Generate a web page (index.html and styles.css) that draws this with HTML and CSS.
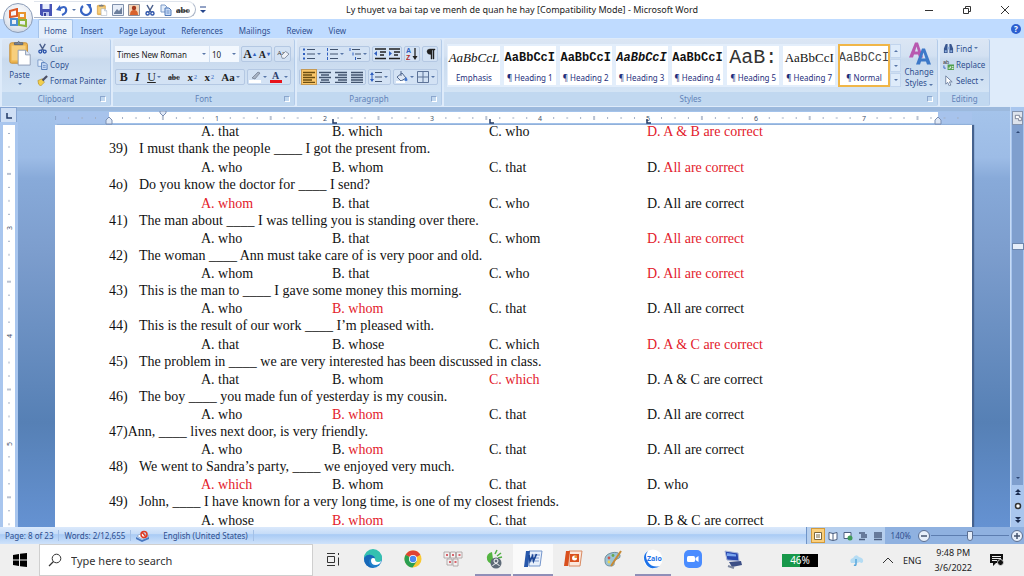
FILE: index.html
```html
<!DOCTYPE html>
<html lang="en">
<head>
    <meta charset="UTF-8">
    <title>Ly thuyet va bai tap ve menh de quan he hay - Microsoft Word</title>
    <link rel="stylesheet" href="styles.css">
</head>
<body>
    <svg class="defs" width="0" height="0" aria-hidden="true">
        <symbol id="i-cut" viewBox="0 0 12 12"><path d="M3 1l4 7M9 1L5 8" stroke="#4a5f8c" stroke-width="1.5" fill="none"/><circle cx="3.6" cy="9.4" r="1.6" fill="none" stroke="#2850a8" stroke-width="1.4"/><circle cx="8.4" cy="9.4" r="1.6" fill="none" stroke="#2850a8" stroke-width="1.4"/></symbol>
        <symbol id="i-copy" viewBox="0 0 12 12"><path d="M1 1h4l2 2v5H1z" fill="#e4eefb" stroke="#7d9bc9"/><path d="M5 4h4l2 2v5.500H5z" fill="#c8dbf6" stroke="#4f78b8"/><path d="M6.500 7h3M6.500 9h3" stroke="#6b8fc8"/></symbol>
        <symbol id="i-paste" viewBox="0 0 24 28"><rect x="1" y="3" width="19" height="22" rx="2" fill="#eeb650" stroke="#c58a32"/><rect x="3" y="6" width="15" height="16" fill="#f7cf7d"/><path d="M6 5V3h3q1.500-3 3 0h3v2z" fill="#7c8798" stroke="#586478"/><path d="M10 11h8l5 5v11H10z" fill="#fff" stroke="#8b9bb4"/><path d="M18 11v5h5" fill="#dfe7f3" stroke="#8b9bb4"/></symbol>
        <symbol id="i-abc" viewBox="0 0 14 12"><text x="0" y="9" font-family="Liberation Serif" font-size="9" font-weight="bold" fill="#333">abc</text><path d="M0 7h14" stroke="#333"/></symbol>
    </svg>

    <div class="window">
        <header class="titlebar">
            <div class="quick-area">
                <div class="quick">
                    <button title="Save"><svg viewBox="0 0 12 12"><path d="M0 0h12v12H1.500L0 10.500z" fill="#4753b5"/><path d="M2.500 0h7v5h-7z" fill="#e9effc"/><path d="M3 8h6v4H3z" fill="#b9c3ea"/><path d="M4 9h2v3H4z" fill="#35409a"/></svg></button>
                    <button title="Undo"><svg viewBox="0 0 12 12"><path d="M3 5q6-4 7 0t-4 6" fill="none" stroke="#3864c4" stroke-width="2.200"/><path d="M0 6l4-5 1 6z" fill="#3864c4"/></svg></button>
                    <i class="arrow"></i>
                    <button title="Repeat"><svg viewBox="0 0 12 12"><path d="M3 2a5 5 0 1 0 6 0" fill="none" stroke="#3864c4" stroke-width="2.200"/><path d="M6 0h5v5z" fill="#3864c4"/></svg></button>
                    <button title="Paste"><svg><use href="#i-paste"/></svg></button>
                    <button title="Picture"><svg viewBox="0 0 12 12"><path d="M.5.5h11v11H.5z" fill="#e8eef8" stroke="#8292ad"/><path d="M2 9l3-4 2 2 3-4v7H2z" fill="#6d7f9c"/></svg></button>
                    <button title="Contact"><svg viewBox="0 0 12 12"><path d="M.5.5h11v11H.5z" fill="#f5d6b8" stroke="#8a8f9c"/><circle cx="6" cy="4" r="2.200" fill="#a33a1e"/><path d="M2 11q0-5 4-5t4 5z" fill="#d9622c"/></svg></button>
                    <button title="Cut"><svg><use href="#i-cut"/></svg></button>
                    <button title="Copy"><svg><use href="#i-copy"/></svg></button>
                    <button title="Strikethrough"><svg><use href="#i-abc"/></svg></button>
                </div>
                <svg class="more" viewBox="0 0 6 8"><path d="M0 1h6" stroke="#26468c"/><path d="M0 4h6L3 7z" fill="#26468c"/></svg>
            </div>
            <h1>Ly thuyet va bai tap ve menh de quan he hay [Compatibility Mode] - Microsoft Word</h1>
            <div class="controls">
                <button title="Minimize"><svg viewBox="0 0 10 10"><path d="M1 5.500h8" stroke="#333"/></svg></button>
                <button title="Restore"><svg viewBox="0 0 10 10"><path d="M1.500 3.500h5v5h-5zM3.500 3V1.500h5v5H7" fill="none" stroke="#333"/></svg></button>
                <button title="Close"><svg viewBox="0 0 10 10"><path d="M1 1l8 8M9 1L1 9" stroke="#333"/></svg></button>
            </div>
            <button class="orb" title="Office Button"><svg viewBox="0 0 20 20"><path d="M2 3l7-2v7l-7 1z" fill="none" stroke="#dd5a28" stroke-width="2"/><path d="M11 5h6v5h-6z" fill="none" stroke="#e8952e" stroke-width="2"/><path d="M3 11h6v6H3z" fill="none" stroke="#4e8fd0" stroke-width="2"/><path d="M11 12h7v6l-7-1z" fill="none" stroke="#8ab43c" stroke-width="2"/></svg></button>
        </header>

        <nav class="tabs">
            <button class="tab active">Home</button>
            <button class="tab">Insert</button>
            <button class="tab">Page Layout</button>
            <button class="tab">References</button>
            <button class="tab">Mailings</button>
            <button class="tab">Review</button>
            <button class="tab">View</button>
            <button class="help" title="Help">?</button>
        </nav>

        <div class="ribbon">
            <section class="group clipboard">
                <div class="body">
                    <button class="big"><svg class="paste-icon"><use href="#i-paste"/></svg>Paste<i class="arrow"></i></button>
                    <div class="stack">
                        <button><svg><use href="#i-cut"/></svg>Cut</button>
                        <button><svg><use href="#i-copy"/></svg>Copy</button>
                        <button><svg viewBox="0 0 12 12"><path d="M1 6l5-2 2 4-4 4q-3-1-3-6z" fill="#f2cf4e" stroke="#a98520" stroke-width=".6"/><path d="M6 6l5-5" stroke="#4a4f66" stroke-width="2.400"/></svg>Format Painter</button>
                    </div>
                </div>
                <h2>Clipboard<i class="launch"></i></h2>
            </section>

            <section class="group font">
                <div class="body rows">
                    <div class="line">
                        <span class="combo wide"><select aria-label="Font"><option>Times New Roman</option></select></span>
                        <span class="combo"><select aria-label="Font size"><option>10</option></select></span>
                        <div class="tools">
                            <button class="serif grow">A<sup>▴</sup></button>
                            <button class="serif shrink">A<sup>▾</sup></button>
                        </div>
                        <div class="tools single">
                            <button title="Clear formatting"><svg viewBox="0 0 14 12"><text x="0" y="7" font-family="Liberation Serif" font-size="8" fill="#333">Aa</text><path d="M5 8l5-5 4 3-5 5H6z" fill="#eef1f6" stroke="#7a879c"/></svg></button>
                        </div>
                    </div>
                    <div class="line">
                        <div class="tools fill">
                            <button class="serif"><b>B</b></button>
                            <button class="serif"><b><em>I</em></b></button>
                            <button class="serif"><u>U</u><i class="arrow"></i></button>
                            <button title="Strikethrough"><svg><use href="#i-abc"/></svg></button>
                            <button class="serif small"><b>x</b><sub>2</sub></button>
                            <button class="serif small"><b>x</b><sup>2</sup></button>
                            <button class="serif small"><b>Aa</b><i class="arrow"></i></button>
                        </div>
                        <div class="tools">
                            <button title="Highlight"><svg viewBox="0 0 12 12"><path d="M3 7l6-6 2 1-5 6z" fill="#a9b3c3" stroke="#6c788c" stroke-width=".7"/><path d="M0 9h12v3H0z" fill="#fff"/></svg><i class="arrow"></i></button>
                            <button title="Font color"><svg viewBox="0 0 12 12"><text x="2" y="8" font-family="Liberation Serif" font-size="10" font-weight="bold" fill="#2c3e6b">A</text><path d="M0 9h12v3H0z" fill="#e8141c"/></svg><i class="arrow"></i></button>
                        </div>
                    </div>
                </div>
                <h2>Font<i class="launch"></i></h2>
            </section>

            <section class="group paragraph">
                <div class="body rows">
                    <div class="line">
                        <div class="tools fill">
                            <button title="Bullets"><svg viewBox="0 0 12 12"><path d="M4 1.500h8M4 6h8M4 10.500h8" stroke="#41536e"/><path d="M0 1.500h2M0 6h2M0 10.500h2" stroke="#2f5fc0" stroke-width="2"/></svg><i class="arrow"></i></button>
                            <button title="Numbering"><svg viewBox="0 0 12 12"><path d="M4 1.500h8M4 6h8M4 10.500h8" stroke="#41536e"/><path d="M1.500 0v3M1.500 4.500v3M1.500 9v3" stroke="#2f5fc0"/></svg><i class="arrow"></i></button>
                            <button title="Multilevel list"><svg viewBox="0 0 12 12"><path d="M3 1.500h8M6 6h6M8 10.500h4" stroke="#41536e"/><path d="M1 0v3M4 4.500v3M6.500 9v3" stroke="#2f5fc0"/></svg><i class="arrow"></i></button>
                        </div>
                        <div class="tools">
                            <button title="Decrease indent"><svg viewBox="0 0 12 12"><path d="M1 1h11M6 4h6M6 7h4M1 10.500h11" stroke="#222" stroke-width="1.500"/><path d="M0 5.500l3-2.500v5z" fill="#2f5fc0"/></svg></button>
                            <button title="Increase indent"><svg viewBox="0 0 12 12"><path d="M1 1h11M6 4h6M6 7h4M1 10.500h11" stroke="#222" stroke-width="1.500"/><path d="M4 5.500L1 3v5z" fill="#2f5fc0"/></svg></button>
                        </div>
                        <div class="tools single">
                            <button title="Sort"><svg viewBox="0 0 12 12"><text x="0" y="5" font-family="Liberation Sans" font-size="7" font-weight="bold" fill="#2f5fc0">A</text><text x="0" y="12" font-family="Liberation Sans" font-size="7" font-weight="bold" fill="#b02a2a">Z</text><path d="M9 0v9" stroke="#222" stroke-width="1.300"/><path d="M6.500 8h5L9 12z" fill="#222"/></svg></button>
                        </div>
                        <div class="tools single">
                            <button title="Show marks"><svg viewBox="0 0 12 12"><path d="M6 1h5v1H10v9H9V2H8v9H7V6.500Q3 6.500 3 3.500 3 1 6 1z" fill="#222" stroke="#222" stroke-width=".4"/></svg></button>
                        </div>
                    </div>
                    <div class="line">
                        <div class="tools fill">
                            <button class="on" title="Align left"><svg viewBox="0 0 12 12"><path d="M0 1.500h12M0 4h9M0 6.500h12M0 9h9M0 11.500h12" stroke="#6b4d10" stroke-width="1.300"/></svg></button>
                            <button title="Center"><svg viewBox="0 0 12 12"><path d="M0 1.500h12M2 4h8M0 6.500h12M2 9h8M1 11.500h10" stroke="#41536e" stroke-width="1.300"/></svg></button>
                            <button title="Align right"><svg viewBox="0 0 12 12"><path d="M0 1.500h12M3 4h9M0 6.500h12M3 9h9M0 11.500h12" stroke="#41536e" stroke-width="1.300"/></svg></button>
                            <button title="Justify"><svg viewBox="0 0 12 12"><path d="M0 1.500h12M0 4h12M0 6.500h12M0 9h12M0 11.500h12" stroke="#41536e" stroke-width="1.300"/></svg></button>
                        </div>
                        <div class="tools">
                            <button title="Line spacing"><svg viewBox="0 0 12 12"><path d="M5 1.500h7M5 6h7M5 10.500h7" stroke="#41536e"/><path d="M2 2v8" stroke="#2f5fc0"/><path d="M0 4l2-3 2 3zM0 8l2 3 2-3z" fill="#2f5fc0"/></svg><i class="arrow"></i></button>
                        </div>
                        <div class="tools double">
                            <button title="Shading"><svg viewBox="0 0 12 12"><path d="M1 6l5-4 4 5-5 3z" fill="#dfe8f5" stroke="#53698f"/><path d="M5 0v5" stroke="#53698f"/><path d="M10 6q3 4 0 4t0-4z" fill="#3f74cf"/><path d="M0 10h9v2H0z" fill="#fff"/></svg><i class="arrow"></i></button>
                            <button title="Borders"><svg viewBox="0 0 12 12"><path d="M.5.500h11v11H.5zM6 0v12M0 6h12" fill="none" stroke="#5d7397"/></svg><i class="arrow"></i></button>
                        </div>
                    </div>
                </div>
                <h2>Paragraph<i class="launch"></i></h2>
            </section>

            <section class="group styles">
                <div class="body">
                    <div class="gallery">
                        <button class="style emphasis"><span>AaBbCcL</span>Emphasis</button>
                        <button class="style mono"><span>AaBbCcI</span>¶ Heading 1</button>
                        <button class="style mono"><span>AaBbCcI</span>¶ Heading 2</button>
                        <button class="style mono slant"><span>AaBbCcI</span>¶ Heading 3</button>
                        <button class="style mono"><span>AaBbCcI</span>¶ Heading 4</button>
                        <button class="style large"><span>AaB:</span>¶ Heading 5</button>
                        <button class="style roman"><span>AaBbCcI</span>¶ Heading 7</button>
                        <button class="style mono plain selected"><span>AaBbCcI</span>¶ Normal</button>
                    </div>
                    <div class="scroller">
                        <button title="Up"><i class="arrow up"></i></button>
                        <button title="Down"><i class="arrow"></i></button>
                        <button title="More"><i class="arrow"></i></button>
                    </div>
                    <button class="big change"><svg viewBox="0 0 24 24"><path d="M2 16L8 1h3l5 15h-4l-1-3H7l-1 3zM8 10h3L9.500 5z" fill="#b85ab0"/><path d="M9 23l6-16h3l6 16h-4l-1-3h-5l-1 3zM14.500 17h4l-2-6z" fill="#3d78c8"/></svg>Change<span>Styles <i class="arrow"></i></span></button>
                </div>
                <h2>Styles<i class="launch"></i></h2>
            </section>

            <section class="group editing">
                <div class="body">
                    <div class="stack">
                        <button><svg viewBox="0 0 12 12"><path d="M1 11V6l2-5h2v10zM7 11V1h2l2 5v5z" fill="#38568f"/><path d="M5 4h2v3H5zM2 8h2v2H2zM8 8h2v2H8z" fill="#8fb0e0"/></svg>Find <i class="arrow"></i></button>
                        <button><svg viewBox="0 0 12 12"><text x="0" y="5" font-family="Liberation Sans" font-size="6" fill="#333">ab</text><path d="M5 6h7v6H5z" fill="#4f9e4c"/><path d="M6 10h2V8M9.500 8.500h2M9.500 10.500h2" fill="none" stroke="#fff"/><path d="M1 7v3h2" fill="none" stroke="#3864c4"/></svg>Replace</button>
                        <button><svg viewBox="0 0 12 12"><path d="M3 1v9l2-2 2 4 1.500-1L7 7.500h3z" fill="#fff" stroke="#6c7f9f"/></svg>Select <i class="arrow"></i></button>
                    </div>
                </div>
                <h2>Editing</h2>
            </section>
        </div>

        <main class="workspace">
            <button class="tabstop" title="Left tab"><svg viewBox="0 0 10 10"><path d="M3 2v5h5" fill="none" stroke="#223a66" stroke-width="1.500"/></svg></button>
            <svg class="ruler" height="14">
                <defs>
                    <pattern id="inch" x="54" width="107.800" height="14" patternUnits="userSpaceOnUse">
                        <path d="M13.500 6v2M27 6v2M40.400 6v2M67.400 6v2M80.900 6v2M94.300 6v2" stroke="#a3afc4"/>
                        <path d="M53.900 5v4" stroke="#7485a3"/>
                    </pattern>
                </defs>
                <rect y="1" width="100%" height="11" fill="#a7c3ec"/>
                <rect x="54" y="1" width="829" height="11" fill="#fff"/>
                <rect y="1" width="100%" height="11" fill="url(#inch)"/>
                <g class="numbers">
                    <text x="162" y="10">1</text><text x="270" y="10">2</text><text x="377" y="10">3</text><text x="485" y="10">4</text>
                    <text x="593" y="10">5</text><text x="701" y="10">6</text><text x="809" y="10">7</text>
                </g>
                <path d="M105 0h6v2l-3 3-3-3zM51 13V9l3-3 3 3v4zM880 13V9l3-3 3 3v4z" fill="#dfe8f6" stroke="#7b8fb3"/>
                <path d="M278 8v4h4M435 8v4h4M592 8v4h4" fill="none" stroke="#223a66" stroke-width="1.500"/>
            </svg>
            <svg class="side-ruler">
                <defs>
                    <pattern id="side" y="-5" width="12" height="107.800" patternUnits="userSpaceOnUse">
                        <path d="M5 13.500h2M5 27h2M5 40.400h2M5 67.400h2M5 80.900h2M5 94.300h2" stroke="#a3afc4"/>
                        <path d="M4 53.900h4" stroke="#7485a3"/>
                    </pattern>
                </defs>
                <rect width="100%" height="100%" fill="url(#side)"/>
                <g class="numbers">
                    <text transform="translate(9 103) rotate(-90)">3</text>
                    <text transform="translate(9 211) rotate(-90)">4</text>
                    <text transform="translate(9 319) rotate(-90)">5</text>
                </g>
            </svg>
            <article class="page">
                <ol class="questions">
                    <li>
                        <ul><li>A. that</li><li>B. which</li><li>C. who</li><li class="key">D. A &amp; B are correct</li></ul>
                    </li>
                    <li class="loose">
                        <p><span>39)</span>I must thank the people ____ I got the present from.</p>
                        <ul><li>A. who</li><li>B. whom</li><li>C. that</li><li>D. <span class="key">All are correct</span></li></ul>
                    </li>
                    <li class="loose">
                        <p><span>4o)</span>Do you know the doctor for ____ I send?</p>
                        <ul><li class="key">A. whom</li><li>B. that</li><li>C. who</li><li>D. All are correct</li></ul>
                    </li>
                    <li>
                        <p><span>41)</span>The man about ____ I was telling you is standing over there.</p>
                        <ul><li>A. who</li><li>B. that</li><li>C. whom</li><li class="key">D. All are correct</li></ul>
                    </li>
                    <li>
                        <p><span>42)</span>The woman ____ Ann must take care of is very poor and old.</p>
                        <ul><li>A. whom</li><li>B. that</li><li>C. who</li><li class="key">D. All are correct</li></ul>
                    </li>
                    <li>
                        <p><span>43)</span>This is the man to ____ I gave some money this morning.</p>
                        <ul><li>A. who</li><li class="key">B. whom</li><li>C. that</li><li>D. All are correct</li></ul>
                    </li>
                    <li class="loose">
                        <p><span>44)</span>This is the result of our work ____ I’m pleased with.</p>
                        <ul><li>A. that</li><li>B. whose</li><li>C. which</li><li class="key">D. A &amp; C are correct</li></ul>
                    </li>
                    <li>
                        <p><span>45)</span>The problem in ____ we are very interested has been discussed in class.</p>
                        <ul><li>A. that</li><li>B. whom</li><li class="key">C. which</li><li>D. A &amp; C are correct</li></ul>
                    </li>
                    <li>
                        <p><span>46)</span>The boy ____ you made fun of yesterday is my cousin.</p>
                        <ul><li>A. who</li><li class="key">B. whom</li><li>C. that</li><li>D. All are correct</li></ul>
                    </li>
                    <li>
                        <p>47)Ann, ____ lives next door, is very friendly.</p>
                        <ul><li>A. who</li><li>B. <span class="key">whom</span></li><li>C. that</li><li>D. All are correct</li></ul>
                    </li>
                    <li>
                        <p><span>48)</span>We went to Sandra’s party, ____ we enjoyed very much.</p>
                        <ul><li class="key">A. which</li><li>B. whom</li><li>C. that</li><li>D. who</li></ul>
                    </li>
                    <li class="loose">
                        <p><span>49)</span>John, ____ I have known for a very long time, is one of my closest friends.</p>
                        <ul><li>A. whose</li><li class="key">B. whom</li><li>C. that</li><li>D. B &amp; C are correct</li></ul>
                    </li>
                </ol>
            </article>
            <div class="scrollbar">
                <button class="view-ruler" title="View ruler"><svg viewBox="0 0 12 12"><path d="M2 2h6v3h3v5H7V7H2z" fill="#fff" stroke="#4a5570"/></svg></button>
                <div class="track">
                    <i class="arrow up"></i>
                    <div class="thumb"></div>
                    <i class="arrow"></i>
                </div>
                <button title="Previous page"><svg viewBox="0 0 8 8"><path d="M1 4l3-3 3 3zM1 7l3-3 3 3z" fill="#1c2d50"/></svg></button>
                <button title="Browse object"><svg viewBox="0 0 8 8"><circle cx="4" cy="4" r="2.500" fill="#fff" stroke="#333" stroke-width="1.500"/></svg></button>
                <button title="Next page"><svg viewBox="0 0 8 8"><path d="M1 1l3 3 3-3zM1 4l3 3 3-3z" fill="#1c2d50"/></svg></button>
            </div>
        </main>

        <footer class="status">
            <span>Page: 8 of 23</span>
            <span>Words: 2/12,655</span>
            <span class="proof"><svg viewBox="0 0 14 12"><path d="M0 7l6 3 7-3v2l-7 3-6-3z" fill="#4a78c0"/><path d="M1 6l5-3 7 3-7 3z" fill="#fff" stroke="#7d92b8" stroke-width=".6"/><circle cx="8" cy="4.500" r="3" fill="none" stroke="#df3b24" stroke-width="1.500"/><path d="M6 2l4 5" stroke="#df3b24" stroke-width="1.500"/></svg></span>
            <span>English (United States)</span>
            <div class="views">
                <button class="on" title="Print layout"><svg viewBox="0 0 10 10"><path d="M1.500 1.500h7v7h-7zM3 4h4M3 6h4" fill="#fff" stroke="#7d683c"/></svg></button>
                <button title="Full screen reading"><svg viewBox="0 0 10 10"><path d="M1 1.500l4 1 4-1v7l-4 1-4-1zM5 2v7" fill="#fff" stroke="#4c5f80"/></svg></button>
                <button title="Web layout"><svg viewBox="0 0 10 10"><path d="M1 1.500h7v6H1z" fill="#fff" stroke="#4c5f80"/><circle cx="7" cy="7" r="2.500" fill="#3f9a58"/></svg></button>
                <button title="Outline"><svg viewBox="0 0 10 10"><path d="M1 2h6M3 4h6M3 6h6M1 8.500h6" stroke="#4c5f80" stroke-width="1.300"/></svg></button>
                <button title="Draft"><svg viewBox="0 0 10 10"><path d="M1 2h8M1 4h8M1 6h8M1 8.500h8" stroke="#4c5f80" stroke-width="1.500"/></svg></button>
            </div>
            <label class="zoom" for="zoom">140%</label>
            <button class="round" title="Zoom out"><svg viewBox="0 0 10 10"><path d="M2 5h6" stroke="#44546f" stroke-width="1.500"/></svg></button>
            <input type="range" id="zoom" min="0" max="100" value="50">
            <button class="round" title="Zoom in"><svg viewBox="0 0 10 10"><path d="M2 5h6M5 2v6" stroke="#44546f" stroke-width="1.500"/></svg></button>
        </footer>
    </div>

    <div class="taskbar">
        <button class="start" title="Start"><svg viewBox="0 0 14 14"><path d="M0 2l6-1v5.500H0zM7 .8L14 0v6.500H7zM0 7.500h6V13l-6-1zM7 7.500h7V14l-7-.8z" fill="#000"/></svg></button>
        <label class="search"><svg viewBox="0 0 14 14"><circle cx="8.500" cy="5.500" r="4.300" fill="none" stroke="#333"/><path d="M5.500 8.500L1 13" stroke="#333" stroke-width="1.200"/></svg><input type="text" placeholder="Type here to search" aria-label="Search"></label>
        <div class="apps">
            <button title="Task view"><svg viewBox="0 0 20 20"><path d="M4.500 7.500h7v6h-7zM4 4.500h8M4 16.500h8M15.500 4v2M15.500 8.500v8" fill="none" stroke="#333"/></svg></button>
            <button title="Edge"><svg viewBox="0 0 20 20"><circle cx="10" cy="10" r="9" fill="#1f7fcb"/><path d="M1 9a9 9 0 0 1 18 0q0 4-4 4t-3-3q0-3-4-4t-7 3z" fill="#35c0b0"/><path d="M1 9q3-4 7-3 4 1 4 4 0-1-2-1-4 0-4 4 0 4 5 5.800Q1 19 1 9z" fill="#1768b8"/><path d="M10 9q2 0 2 1 0 3 3 3 2 0 3.500-1-2 4-6 4T8 12q0-3 2-3z" fill="#fff"/></svg></button>
            <button title="Chrome"><svg viewBox="0 0 20 20"><circle cx="10" cy="10" r="8.500" fill="#f9c933"/><path d="M10 10L2.600 5.700A8.500 8.500 0 0 1 17.400 5.700z" fill="#df4433"/><path d="M10 10L2.600 5.700A8.500 8.500 0 0 0 9.500 18.500L14 12z" fill="#2b9f51"/><circle cx="10" cy="10" r="4" fill="#fff"/><circle cx="10" cy="10" r="3.200" fill="#4a8af0"/></svg></button>
            <button title="Unikey"><svg viewBox="0 0 20 20"><path d="M1 3h5.500v6H1zM7.500 3h5v6h-5zM13.500 3H19v6h-5.500zM4 10h5v6H4zM10 10h5v7h-5z" fill="#f3f1f1" stroke="#a59d9d" stroke-width=".8"/><path d="M3 6h2M9 6h2M15.500 6h2M6 13h2M11.500 13h2" stroke="#d8636b" stroke-width="2"/></svg></button>
            <button class="open" title="Contacts"><svg viewBox="0 0 20 20"><path d="M9 3a6 6 0 1 0 4 11l-3-4z" fill="#54b442"/><path d="M12 5l2-4M14 7l4-3M15 9l4-1" stroke="#4fae43" stroke-width="1.500"/><circle cx="13" cy="14" r="5.500" fill="#5e6a78"/><circle cx="13" cy="12" r="2" fill="none" stroke="#fff"/><path d="M9.500 17q3.500-5 7 0" fill="none" stroke="#fff"/></svg></button>
            <button class="open current" title="Word"><svg viewBox="0 0 20 20"><path d="M6 2h13l-2 15H6z" fill="#e8f0fb" stroke="#7596cc"/><path d="M8 6h9M8 9h8M8 12h8" stroke="#7e9bd0"/><path d="M3 2h4L5 18H1z" fill="#2858ab"/><path d="M6 6l1 6 2.500-5 1 5 3-7" fill="none" stroke="#1c4695" stroke-width="1.700"/></svg></button>
            <button title="PowerPoint"><svg viewBox="0 0 20 20"><path d="M6 2h13l-2 15H6z" fill="#fbe7dc" stroke="#d98a62"/><path d="M3 2h4L5 17H1z" fill="#d9501e"/><path d="M7 5h9v8H7z" fill="#d9501e"/><circle cx="11.500" cy="9" r="2.500" fill="#fff"/><path d="M11.500 9V6.500H14V9z" fill="#e79a3c"/></svg></button>
            <button title="Paint"><svg viewBox="0 0 20 20"><path d="M2 12q-1-6 6-8t9 2q1 3-3 4t-3 4-4 3-5-5z" fill="#9bc4d6" stroke="#71909d"/><circle cx="6" cy="9" r="1.400" fill="#d0574c"/><circle cx="10" cy="6.500" r="1.400" fill="#67a84f"/><circle cx="6" cy="13" r="1.400" fill="#e9d255"/><path d="M8 17L18 2" stroke="#c78a35" stroke-width="2"/></svg></button>
            <button class="open" title="Zalo"><svg viewBox="0 0 20 20"><circle cx="10" cy="10" r="9.500" fill="#fff"/><path d="M5 2Q-1 6 2 13t9 6q3 0 6-2-8 2-12-4T5 2z" fill="#1c72e8"/><text x="4" y="12" font-family="Open Sans" font-size="7" font-weight="bold" fill="#1c72e8">Zalo</text></svg></button>
            <button title="Zoom"><svg viewBox="0 0 20 20"><rect x="1" y="1" width="18" height="18" rx="5" fill="#4a8cff"/><rect x="4" y="7" width="8" height="6" rx="1.500" fill="#fff"/><path d="M12.500 9l3-2v6l-3-2z" fill="#fff"/></svg></button>
            <button title="Remote desktop"><svg viewBox="0 0 20 20"><path d="M2 2l13 2 1 8-12-1z" fill="#2848b0" stroke="#a9b6d8"/><path d="M4 4l9 1.500v2L4 7z" fill="#79a5ef"/><path d="M6 13l12-1 1 4-10 2z" fill="#3d4f86"/><path d="M5 17l6 2" stroke="#7c879f" stroke-width="2"/></svg></button>
        </div>
        <div class="tray">
            <div class="battery">46%</div>
            <svg class="weather" viewBox="0 0 16 16"><path d="M2 11q-2-4 2-5 3-5 6-1 5 1 4 5-2 2-3 0l-3 1z" fill="#b5dcf3"/><path d="M7 7v5q0 2-2 1" fill="none" stroke="#58a7dc" stroke-width="1.500"/></svg>
            <svg class="chevron" viewBox="0 0 10 10"><path d="M0 8l5-5 5 5" fill="none" stroke="#333"/></svg>
            <span class="lang">ENG</span>
            <time>9:48 PM<br>3/6/2022</time>
            <button title="Notifications"><svg viewBox="0 0 14 14"><path d="M0 1h13v9H6l-3 3v-3H0z" fill="#111"/><path d="M2 3.500h9M2 5.500h9M2 7.500h5" stroke="#f0f0f0"/><circle cx="10.500" cy="9.500" r="3" fill="#111" stroke="#f0f0f0" stroke-width=".8"/></svg></button>
        </div>
    </div>
</body>
</html>
```

FILE: styles.css
```css
* {
    box-sizing: border-box;
}
body {
    margin: 0;
    height: 100vh;
    display: flex;
    flex-direction: column;
    overflow: hidden;
    font-family: "Noto Sans", "Open Sans", sans-serif;
    font-size: 8px;
    color: #2f4f8f;
}
.defs {
    display: none;
}
button {
    display: flex;
    align-items: center;
    justify-content: center;
    margin: 0;
    padding: 0;
    border: none;
    background: none;
    font: inherit;
    color: inherit;
    white-space: nowrap;
}
svg {
    flex: none;
    display: block;
}
h1, h2, p, ol, ul {
    margin: 0;
    padding: 0;
    font-weight: normal;
    list-style: none;
}
.arrow {
    flex: none;
    display: inline-block;
    border: 2px solid transparent;
    border-top-color: #5876a8;
    border-bottom-width: 0;
}
.arrow.up {
    border-width: 0 2px 2px;
    border-bottom-color: #5876a8;
}
.window {
    flex: 1;
    min-height: 0;
    display: flex;
    flex-direction: column;
}

/* title bar */
.titlebar {
    position: relative;
    flex: none;
    display: flex;
    align-items: center;
    height: 19px;
    background: #fff;
}
.quick-area {
    flex: 1;
    display: flex;
    align-items: center;
    padding-left: 34px;
}
.quick {
    display: flex;
    align-items: center;
    gap: 4px;
    height: 17px;
    padding: 0 5px 0 6px;
    border: 1px solid #a9b4c6;
    border-top-color: #dfe4ec;
    border-left: none;
    border-radius: 0 9px 9px 0;
}
.quick svg {
    width: 12px;
    height: 12px;
}
.quick button:last-child svg {
    width: 14px;
}
.more {
    width: 6px;
    height: 8px;
    margin-left: 4px;
}
.titlebar h1 {
    text-align: center;
    font-size: 9px;
    color: #222;
}
.controls {
    flex: 1;
    display: flex;
    justify-content: flex-end;
    gap: 28px;
    padding-right: 14px;
}
.controls svg {
    width: 10px;
    height: 10px;
}
.orb {
    position: absolute;
    left: 3px;
    top: 3px;
    width: 30px;
    height: 30px;
    border: 1px solid #8c9db8;
    border-radius: 50%;
    background: radial-gradient(circle at 50% 35%, #fff, #e3e8f0 60%, #b9c5d8);
}
.orb svg {
    width: 20px;
    height: 20px;
}

/* tabs */
.tabs {
    flex: none;
    display: flex;
    height: 19px;
    padding-left: 38px;
    background: #bfdbff;
}
.tab {
    padding: 3px 8px 0;
}
.tab.active {
    padding: 3px 5px 0;
    border: 1px solid #a5c3ea;
    border-bottom: none;
    border-radius: 2px 2px 0 0;
    background: #e6f0fb;
}
.help {
    align-self: center;
    width: 10px;
    height: 10px;
    margin: 0 3px 0 auto;
    border-radius: 50%;
    background: #2c5fd0;
    color: #fff;
    font-weight: bold;
}

/* ribbon */
.ribbon {
    flex: none;
    display: flex;
    gap: 2px;
    height: 69px;
    padding: 1px 0 1px 2px;
    background: #deebfa;
}
.group {
    display: flex;
    flex-direction: column;
    border-right: 1px solid #b3cbe9;
    border-radius: 2px;
    background: linear-gradient(#dbe6f4, #d3e1f2 25%, #c9daee 30%, #d8e8f8);
}
.group h2 {
    position: relative;
    height: 14px;
    line-height: 14px;
    text-align: center;
    font-size: 8px;
    color: #6283b8;
    background: #c1d8f0;
}
.launch {
    position: absolute;
    right: 4px;
    top: 4px;
    width: 6px;
    height: 6px;
    border: 1px solid #8ba6cd;
    border-right-color: #fff;
    border-bottom-color: #fff;
}
.body {
    flex: 1;
    display: flex;
}
.stack {
    display: flex;
    flex-direction: column;
    align-items: flex-start;
    padding-top: 1px;
}
.stack button {
    gap: 2px;
    height: 16px;
}
.stack svg {
    width: 11px;
    height: 11px;
}
.big {
    flex-direction: column;
    justify-content: flex-start;
}
.clipboard {
    flex: 0 0 109px;
}
.clipboard .big {
    width: 35px;
    gap: 3px;
    padding-top: 1px;
}
.paste-icon {
    width: 24px;
    height: 26px;
}
.rows {
    flex-direction: column;
    justify-content: space-between;
    padding: 7px 3px 7px 2px;
}
.line {
    display: flex;
    gap: 2px;
    height: 16px;
}
.font {
    flex: 0 0 182px;
}
.paragraph {
    flex: 0 0 145px;
}
.combo {
    position: relative;
    display: flex;
    width: 29px;
    background: #f3f8fe;
}
.combo.wide {
    width: 94px;
    margin-right: -1px;
}
.combo::after {
    content: "";
    position: absolute;
    right: 3px;
    top: 7px;
    border: 2px solid transparent;
    border-top-color: #5876a8;
    border-bottom-width: 0;
    pointer-events: none;
}
.combo select {
    width: 100%;
    padding: 0 0 0 2px;
    border: none;
    appearance: none;
    background: none;
    font: inherit;
    color: #222;
}
.tools {
    flex: 2;
    display: flex;
    justify-content: space-around;
    border: 1px solid #b4c8e3;
    border-radius: 2px;
    background: #d3e2f4;
}
.tools.single {
    flex: 1;
}
.tools.double {
    flex: 4;
}
.tools.fill {
    flex: 6;
}
.tools button {
    gap: 2px;
    padding: 0 1px;
}
.tools svg {
    width: 12px;
    height: 12px;
}
.tools .on {
    margin: -1px 0;
    background: #fbc76a;
    border: 1px solid #c69a55;
}
.tools .serif {
    gap: 1px;
    font-family: "Liberation Serif", serif;
    font-size: 12px;
    color: #222;
}
.tools .small {
    font-size: 11px;
}
.tools .grow, .tools .shrink {
    font-weight: bold;
}
.tools .shrink {
    font-size: 10px;
}
.serif sup, .serif sub {
    font-size: 6px;
    line-height: 6px;
    color: #2f5fc0;
}
.styles {
    flex: 1 0 auto;
    max-width: 494px;
}
.gallery {
    display: flex;
    flex: 1;
    gap: 4px;
    margin: 5px 0 5px 3px;
    padding: 2px 1px;
    background: #e3eefb;
}
.style {
    flex: 1 0 51px;
    width: 51px;
    flex-direction: column;
    justify-content: space-between;
    padding-bottom: 2px;
    background: #fff;
    color: #1e2f7c;
    overflow: hidden;
}
.style span {
    height: 24px;
    line-height: 24px;
    color: #111;
}
.style.selected {
    margin: -2px -1px;
    border: 2px solid #f0b648;
}
.emphasis span {
    font: italic 13px/24px "Liberation Serif", serif;
}
.mono span {
    font: bold 12px/24px "Liberation Mono", monospace;
}
.slant span {
    font-style: italic;
}
.plain span {
    font-weight: normal;
    color: #444;
}
.large span {
    font: 20px/24px "Liberation Mono", monospace;
    color: #333;
}
.roman span {
    font: 13px/24px "Liberation Serif", serif;
}
.scroller {
    display: flex;
    flex-direction: column;
    gap: 1px;
    width: 11px;
    margin: 5px 0;
}
.scroller button {
    flex: 1;
    border: 1px solid #c2d5ee;
    background: #deebfa;
}
.change {
    width: 36px;
    padding-top: 2px;
    line-height: 11px;
}
.change svg {
    width: 24px;
    height: 25px;
}
.editing {
    flex: 0 0 50px;
}
.editing .stack {
    padding-left: 3px;
}

/* document area */
.workspace {
    flex: 1;
    min-height: 0;
    display: grid;
    grid-template-columns: 17px 1fr 14px;
    grid-template-rows: 18px 1fr;
    column-gap: 38px;
    background:
        linear-gradient(#9cb9dd 4px, transparent 4px),
        linear-gradient(#a5c4eb, #9dbce6 12%, #88aad9 17%, #7c9dcd 35%, #5680b5 75%, #6592d2);
}
.tabstop {
    border: 1px solid #86a5d3;
    background: #cfdff5;
}
.tabstop svg {
    width: 10px;
    height: 10px;
}
.ruler {
    grid-column: 2;
    width: 100%;
    height: 14px;
    margin-top: 4px;
    overflow: hidden;
}
.numbers {
    font-family: "Noto Sans", sans-serif;
    font-size: 7px;
    text-anchor: middle;
    fill: #44526b;
}
.side-ruler {
    grid-column: 1;
    grid-row: 2;
    width: 12px;
    height: 100%;
    margin-left: 3px;
    background: #fff;
    outline: 3px solid #a9c6ee;
}
.page {
    grid-column: 2;
    min-height: 0;
    overflow: hidden;
    padding-left: 54px;
    background: #fff;
    box-shadow: 2px 0 1px #45628e;
    font-family: "Liberation Serif", serif;
    font-size: 14px;
    color: #111;
}
.questions {
    margin-top: -2px;
}
.questions p {
    display: flex;
    height: 18px;
    line-height: 18px;
    white-space: pre;
}
.questions p span {
    width: 30px;
}
.questions .loose p {
    height: 19px;
}
.questions ul {
    display: grid;
    grid-template-columns: 131fr 157fr 158fr 325fr;
    padding-left: 92px;
    line-height: 17px;
}
.key {
    color: #e3202b;
}
.scrollbar {
    grid-column: 3;
    grid-row: 1 / 3;
    display: flex;
    flex-direction: column;
    padding: 4px 1px 0;
    border-left: 1px solid #c6dbf6;
    background: #a9c6ee;
}
.scrollbar button {
    height: 14px;
}
.scrollbar svg {
    width: 8px;
    height: 8px;
}
.scrollbar .view-ruler {
    border: 1px solid #8494ae;
    background: #dde3ec;
}
.track {
    flex: 1;
    display: flex;
    flex-direction: column;
    align-items: center;
    padding: 6px 0;
    background: #7f9fce;
}
.track .arrow {
    border-top-color: #2c4674;
    border-bottom-color: #2c4674;
}
.thumb {
    width: 12px;
    height: 7px;
    margin: 110px 0 auto;
    border: 1px solid #6d87ad;
    background: #e6eef9;
}

/* status bar */
.status {
    flex: none;
    display: flex;
    align-items: center;
    height: 17px;
    background: linear-gradient(#dbe9fb, #c6dcf8 40%, #a9cbf5 45%, #cfe2fa);
}
.status > span {
    padding: 0 5px;
    border-right: 1px solid #a4c0e6;
}
.status .proof {
    padding-right: 8px;
    border-right: none;
}
.proof svg {
    width: 14px;
    height: 12px;
}
.views {
    display: flex;
    gap: 1px;
    height: 17px;
    margin-left: auto;
    padding: 1px 0 1px 4px;
    border-left: 1px solid #6f94c8;
    background: #b6cfee;
}
.views button {
    width: 14px;
}
.views .on {
    background: #fbcf7c;
    border: 1px solid #d29a3b;
}
.views svg {
    width: 10px;
    height: 10px;
}
.zoom {
    height: 17px;
    padding: 0 5px 0 6px;
    line-height: 17px;
}
.zoom, .round, .status input {
    background-color: #8fb1e0;
}
.round {
    width: 15px;
    height: 17px;
}
.round svg {
    width: 12px;
    height: 12px;
    border: 1px solid #5b6f92;
    border-radius: 50%;
    background: #e7effa;
}
.status input {
    width: 78px;
    height: 17px;
    margin: 0;
    appearance: none;
    background-image: linear-gradient(transparent 8px, #5c7db0 8px, #5c7db0 9px, transparent 9px);
}
.status input::-webkit-slider-thumb {
    appearance: none;
    width: 6px;
    height: 10px;
    border: 1px solid #5b6f92;
    border-radius: 0 0 3px 3px;
    background: #e7effa;
}

/* taskbar */
.taskbar {
    flex: none;
    display: flex;
    height: 32px;
    background: #efefef;
    color: #222;
}
.start {
    width: 39px;
}
.start svg {
    width: 14px;
    height: 14px;
}
.search {
    flex: 0 1 274px;
    display: flex;
    align-items: center;
    gap: 9px;
    padding-left: 8px;
    border: 1px solid #cfcfcf;
    background: #fff;
}
.search svg {
    width: 14px;
    height: 14px;
}
.search input {
    flex: 1;
    min-width: 0;
    padding: 0;
    border: none;
    background: none;
    font-family: inherit;
    font-size: 11px;
}
.search input::placeholder {
    color: #333;
}
.apps {
    display: flex;
}
.apps button {
    width: 40px;
    border-bottom: 2px solid transparent;
}
.apps .open {
    border-image: linear-gradient(90deg, transparent 4px, #8f8fb8 4px, #8f8fb8 36px, transparent 36px) 2;
}
.apps .current {
    border-image: none;
    border-bottom-color: #8f8fb8;
    background: #fafafa;
}
.apps svg {
    width: 20px;
    height: 20px;
}
.tray {
    display: flex;
    align-items: center;
    margin-left: auto;
    padding-right: 20px;
}
.battery {
    width: 36px;
    line-height: 13px;
    text-align: center;
    font-size: 10px;
    color: #fff;
    background: linear-gradient(90deg, #17984a 50%, #000 50%);
}
.weather {
    width: 16px;
    height: 16px;
    margin: 0 18px 0 31px;
}
.chevron {
    width: 10px;
    height: 10px;
}
.lang {
    margin: 0 13px 0 10px;
    font-size: 9px;
}
.tray time {
    line-height: 15px;
    text-align: center;
    font-size: 9px;
}
.tray button {
    margin-left: 18px;
}
.tray button svg {
    width: 14px;
    height: 14px;
}
```
